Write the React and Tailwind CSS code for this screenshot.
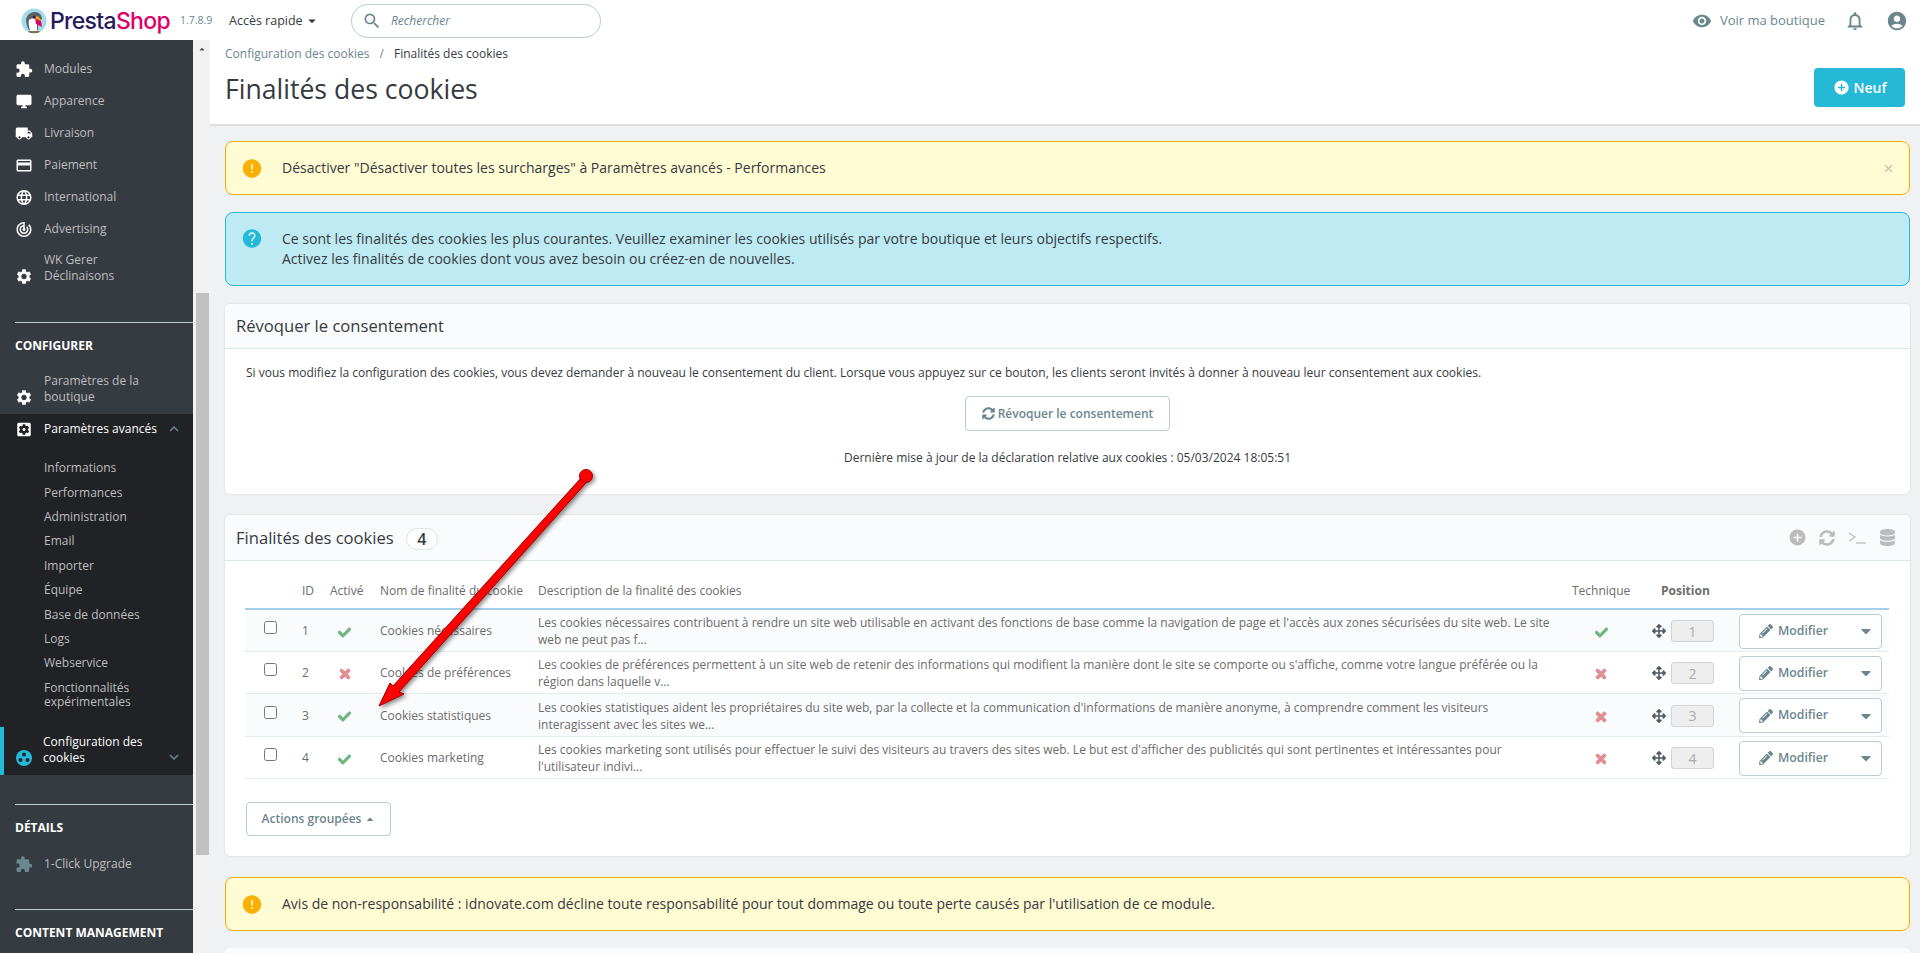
import React from 'react';
import {
  MdExtension, MdDesktopWindows, MdLocalShipping, MdCreditCard, MdLanguage, MdTrackChanges, MdSettings,
  MdSettingsApplications, MdKeyboardArrowUp, MdKeyboardArrowDown, MdVisibility, MdNotificationsNone,
  MdAccountCircle, MdSearch, MdError, MdHelp, MdArrowDropDown, MdAddCircle, MdClose,
} from 'react-icons/md';
import { FaCheck, FaTimes, FaPencilAlt, FaArrowsAlt, FaSyncAlt, FaDatabase, FaCaretUp, FaCaretDown } from 'react-icons/fa';

const TOP_ITEMS = [
  { label: 'Modules', Icon: MdExtension },
  { label: 'Apparence', Icon: MdDesktopWindows },
  { label: 'Livraison', Icon: MdLocalShipping },
  { label: 'Paiement', Icon: MdCreditCard },
  { label: 'International', Icon: MdLanguage },
  { label: 'Advertising', Icon: MdTrackChanges },
];

const SUB_ITEMS = [
  'Informations', 'Performances', 'Administration', 'Email', 'Importer', 'Équipe', 'Base de données', 'Logs', 'Webservice',
];

const ROWS = [
  {
    id: 1, active: true, name: 'Cookies nécessaires', tech: true, h: 'h-[42px]', bg: 'bg-[#fafbfc]',
    desc: "Les cookies nécessaires contribuent à rendre un site web utilisable en activant des fonctions de base comme la navigation de page et l'accès aux zones sécurisées du site web. Le site web ne peut pas f...",
  },
  {
    id: 2, active: false, name: 'Cookies de préférences', tech: false, h: 'h-[42px]', bg: 'bg-white',
    desc: "Les cookies de préférences permettent à un site web de retenir des informations qui modifient la manière dont le site se comporte ou s'affiche, comme votre langue préférée ou la région dans laquelle v...",
  },
  {
    id: 3, active: true, name: 'Cookies statistiques', tech: false, h: 'h-[43px]', bg: 'bg-[#fafbfc]',
    desc: "Les cookies statistiques aident les propriétaires du site web, par la collecte et la communication d'informations de manière anonyme, à comprendre comment les visiteurs interagissent avec les sites we...",
  },
  {
    id: 4, active: true, name: 'Cookies marketing', tech: false, h: 'h-[42px]', bg: 'bg-white',
    desc: "Les cookies marketing sont utilisés pour effectuer le suivi des visiteurs au travers des sites web. Le but est d'afficher des publicités qui sont pertinentes et intéressantes pour l'utilisateur indivi...",
  },
];

const StatusIcon = ({ on }) => (
  <div className="flex justify-center pt-[2px]">
    {on
      ? <FaCheck className="stroke-current stroke-[30] text-[13px] text-[#70b580]" />
      : <FaTimes className="stroke-current stroke-[40] text-[14px] text-[#e08f95]" />}
  </div>
);

const Logo = () => (
  <div className="flex items-center">
    <svg width="26" height="26" viewBox="0 0 26 26" className="ml-[21px]">
      <circle cx="13" cy="13" r="12.5" fill="#a4dbe8" />
      <path d="M5 12 C6 6 10 4 14 4 C18 4 21 7 21 11 L17 13 L17 22 L8 22 C6 19 5 15 5 12 Z" fill="#5c6166" />
      <path d="M8 12 C10 10 14 10 16 12 L16 23 C13 25 10 24 9 22 C8 19 7 15 8 12 Z" fill="#fff" />
      <path d="M14 9 L20 13 L21 19 L15 16 Z" fill="#df0067" />
      <path d="M15 8 L18 9 L20 13 L15 11 Z" fill="#f6a800" />
      <circle cx="13" cy="9" r="1.2" fill="#251b5b" />
      <path d="M7 23 L19 23 L17 25 L9 25 Z" fill="#8a6d4a" />
    </svg>
    <span className="ml-[3px] text-[23px] leading-none tracking-[-0.7px] font-['Inter',sans-serif] font-medium">
      <span className="text-[#251b5b]">Presta</span><span className="text-[#df0067]">Shop</span>
    </span>
  </div>
);

const Header = () => (
  <header className="flex h-10 items-center bg-white pt-[2px]">
    <div className="flex w-[180px] shrink-0 items-center">
      <Logo />
    </div>
    <span className="w-[49px] text-[10.5px] text-[#6c868e]">1.7.8.9</span>
    <span className="flex w-[122px] items-center text-[12.5px] text-[#363a41]">
      Accès rapide <MdArrowDropDown className="text-[18px]" />
    </span>
    <div className="flex h-[34px] w-[250px] items-center rounded-full border border-[#bbcdd2] pl-[10px]">
      <MdSearch className="text-[20px] text-[#6c868e]" />
      <span className="ml-[9px] text-[12px] italic text-[#6c868e]">Rechercher</span>
    </div>
    <div className="ml-auto flex items-center pr-[12px]">
      <MdVisibility className="text-[20px] text-[#6c868e]" />
      <span className="ml-[8px] text-[13px] text-[#6c868e]">Voir ma boutique</span>
      <MdNotificationsNone className="ml-[19px] text-[22px] text-[#6c868e]" />
      <MdAccountCircle className="ml-[20px] text-[22px] text-[#6c868e]" />
    </div>
  </header>
);

const SideSection = ({ title }) => (
  <div className="ml-[15px] shrink-0 border-t border-[#bbcdd2] pt-[15px] text-[12px] leading-[16px] font-bold text-white">{title}</div>
);

const Sidebar = () => (
  <aside className="flex w-[193px] shrink-0 flex-col overflow-hidden bg-[#363a41] pt-[13px] font-['Open_Sans',sans-serif] text-[12px] text-[#bebebe]">
    {TOP_ITEMS.map(({ label, Icon }) => (
      <div key={label} className="flex h-8 shrink-0 items-center pl-[15px]">
        <Icon className="w-[18px] text-[19px] text-white" />
        <span className="ml-[11px]">{label}</span>
      </div>
    ))}
    <div className="mt-[7px] flex shrink-0 items-end pl-[15px]">
      <MdSettings className="-mb-[2px] w-[18px] text-[19px] text-white" />
      <span className="ml-[11px] leading-4">WK Gerer<br />Déclinaisons</span>
    </div>
    <div className="h-[38px] shrink-0" />
    <SideSection title="CONFIGURER" />
    <div className="mt-[19px] flex shrink-0 items-end pb-[9px] pl-[15px]">
      <MdSettings className="-mb-[2px] w-[18px] text-[19px] text-white" />
      <span className="ml-[11px] leading-4">Paramètres de la<br />boutique</span>
    </div>
    <div className="flex h-[361px] shrink-0 flex-col bg-[#202226]">
      <div className="flex h-[30px] shrink-0 items-center pl-[15px] pr-[10px] text-white">
        <MdSettingsApplications className="w-[18px] text-[19px] text-white" />
        <span className="ml-[11px]">Paramètres avancés</span>
        <MdKeyboardArrowUp className="ml-auto text-[18px] text-[#6c868e]" />
      </div>
      <div className="h-[12px] shrink-0" />
      {SUB_ITEMS.map((s) => (
        <div key={s} className="flex h-[24.4px] shrink-0 items-center pl-[44px]">{s}</div>
      ))}
      <div className="mt-[5px] ml-[44px] shrink-0 leading-[14px]">Fonctionnalités<br />expérimentales</div>
      <div className="mt-[18px] flex h-[48px] shrink-0 items-end border-l-4 border-[#25b9d7] pl-[11px] pr-[10px] pb-[9px] text-white">
        <svg width="18" height="18" viewBox="0 0 18 18" className="-mb-[1px] shrink-0">
          <circle cx="9" cy="9" r="8" fill="#25b9d7" />
          <circle cx="9" cy="5.5" r="2" fill="#202226" />
          <circle cx="5.5" cy="11" r="2" fill="#202226" />
          <circle cx="12.5" cy="11" r="2" fill="#202226" />
        </svg>
        <span className="ml-[10px] leading-4">Configuration des<br />cookies</span>
        <MdKeyboardArrowDown className="ml-auto text-[18px] text-[#6c868e]" />
      </div>
    </div>
    <div className="h-[29px] shrink-0" />
    <SideSection title="DÉTAILS" />
    <div className="mt-[20px] flex h-[16px] shrink-0 items-center pl-[15px]">
      <MdExtension className="w-[18px] text-[19px] text-[#6c868e]" />
      <span className="ml-[11px]">1-Click Upgrade</span>
    </div>
    <div className="h-[37px] shrink-0" />
    <SideSection title="CONTENT MANAGEMENT" />
  </aside>
);

const FakeScrollbar = () => (
  <div className="flex w-[17px] shrink-0 flex-col items-center bg-[#f1f1f1] pl-[1px]">
    <FaCaretUp className="mt-[5px] h-[8px] text-[10px] text-[#505050]" />
    <div className="mt-[240px] h-[562px] w-[13px] bg-[#c1c1c1]" />
  </div>
);

const Alert = ({ kind, h, children, close }) => {
  const warn = kind === 'warn';
  return (
    <div className={`relative flex rounded-lg border pl-[15px] text-[14px] leading-[20px] text-[#363a41] ${h} ${warn ? 'border-[#fab000] bg-[#fffbd3]' : 'border-[#25b9d7] bg-[#beeaf3]'}`}>
      {warn
        ? <MdError className="mt-[14px] w-[22px] text-[25px] text-[#fab000]" />
        : <MdHelp className="mt-[13px] w-[22px] text-[25px] text-[#25b9d7]" />}
      <div className="ml-[19px] pt-[16px]">{children}</div>
      {close && <MdClose className="absolute top-[20px] right-[14px] text-[13px] text-[#b8b8a8]" />}
    </div>
  );
};

const PanelHead = ({ children, right }) => (
  <div className="flex items-center justify-between rounded-t-[5px] border-b border-[#dbe6e9] bg-[#fafbfc] pl-[11px] pr-[8px] text-[16.6px] font-normal text-[#363a41]">
    {children}
    {right}
  </div>
);

const RowActions = () => (
  <div className="flex h-[35px] w-[143px] items-center rounded-[4px] border border-[#bbcdd2] bg-white pl-[19px] text-[12.25px] font-semibold text-[#6c868e]">
    <FaPencilAlt className="text-[14px]" />
    <span className="ml-[5px]">Modifier</span>
    <FaCaretDown className="ml-[30px] text-[16px]" />
  </div>
);

const CookieTable = () => (
  <table className="w-[1644px] table-fixed border-collapse text-[12px] text-[#6c6c6c]">
    <colgroup>
      <col className="w-[50px]" />
      <col className="w-[27px]" />
      <col className="w-[50px]" />
      <col className="w-[158px]" />
      <col className="w-[1034px]" />
      <col className="w-[76px]" />
      <col className="w-[90px]" />
      <col className="w-[159px]" />
    </colgroup>
    <thead>
      <tr className="h-[48px] border-b-2 border-[#a4d0e8] text-left text-[12px] font-normal">
        <th />
        <th className="pl-[7px] pb-[8px] align-bottom font-normal">ID</th>
        <th className="pl-[8px] pb-[8px] align-bottom font-normal">Activé</th>
        <th className="pl-[8px] pb-[8px] align-bottom font-normal">Nom de finalité du cookie</th>
        <th className="pl-[8px] pb-[8px] align-bottom font-normal">Description de la finalité des cookies</th>
        <th className="pl-[8px] pb-[8px] align-bottom font-normal">Technique</th>
        <th className="pl-[21px] pb-[8px] align-bottom font-bold">Position</th>
        <th />
      </tr>
    </thead>
    <tbody>
      {ROWS.map((r) => (
        <tr key={r.id} className={`${r.h} border-b border-[#e4ecef] ${r.bg}`}>
          <td className="pt-[2px] text-center"><input type="checkbox" readOnly className="relative -top-[1px]" /></td>
          <td className="pt-[2px] pl-[7px]">{r.id}</td>
          <td className="pt-[2px] pr-[5px]"><StatusIcon on={r.active} /></td>
          <td className="pt-[2px] pl-[8px]">{r.name}</td>
          <td className="px-[8px] pt-[2px] leading-[17px]">{r.desc}</td>
          <td className="pt-[2px] pr-[2px]"><StatusIcon on={r.tech} /></td>
          <td className="pt-[2px]">
            <div className="flex items-center pl-[12px]">
              <FaArrowsAlt className="text-[14px] text-[#505a60]" />
              <span className="ml-[5px] flex h-[22px] w-[43px] items-center justify-center rounded-[3px] border border-[#d3d3d3] bg-[#eee] text-[14px] text-[#aaa]">{r.id}</span>
            </div>
          </td>
          <td className="pt-[2px] pl-[9px]"><RowActions /></td>
        </tr>
      ))}
    </tbody>
  </table>
);

const Main = () => (
  <main className="min-w-0 flex-1 overflow-hidden bg-[#eff1f2]">
    <div className="flex h-[86px] items-start justify-between border-b-2 border-[#dfdfdf] bg-white pl-[15px] pr-[15px]">
      <div>
        <div className="pt-[6px] text-[12px] leading-4 text-[#363a41]">
          <span className="text-[#6c868e]">Configuration des cookies</span>
          <span className="mx-[10px] text-[#6c868e]">/</span>
          Finalités des cookies
        </div>
        <h1 className="mt-[8px] text-[26.6px] leading-[38px] font-normal text-[#363a41]">Finalités des cookies</h1>
      </div>
      <button className="mt-[28px] flex h-[39px] w-[91px] items-center justify-center gap-[4px] rounded-[4px] bg-[#25b9d7] text-[14px] font-semibold text-white">
        <MdAddCircle className="text-[17px]" /> Neuf
      </button>
    </div>

    <div className="flex flex-col pl-[15px] pr-[10px] pt-[15px]">
      <Alert kind="warn" h="h-[54px]" close>Désactiver "Désactiver toutes les surcharges" à Paramètres avancés - Performances</Alert>
      <div className="h-[17px]" />
      <Alert kind="info" h="h-[74px]">
        Ce sont les finalités des cookies les plus courantes. Veuillez examiner les cookies utilisés par votre boutique et leurs objectifs respectifs.<br />
        Activez les finalités de cookies dont vous avez besoin ou créez-en de nouvelles.
      </Alert>

      <section className="mt-[18px] h-[190px] rounded-[5px] bg-white shadow-[0_0_2px_rgba(0,0,0,0.15)]">
        <PanelHead><span className="flex h-[44px] items-center">Révoquer le consentement</span></PanelHead>
        <div className="flex flex-col items-center pt-[15px] text-[12px] text-[#363a41]">
          <p className="w-full pl-[21px] leading-[18px]">Si vous modifiez la configuration des cookies, vous devez demander à nouveau le consentement du client. Lorsque vous appuyez sur ce bouton, les clients seront invités à donner à nouveau leur consentement aux cookies.</p>
          <button className="mt-[14px] flex h-[35px] w-[205px] items-center justify-center gap-[3px] rounded-[4px] border border-[#bbcdd2] text-[12px] font-semibold text-[#6c868e]">
            <FaSyncAlt className="text-[13px]" /> Révoquer le consentement
          </button>
          <p className="mt-[18px] leading-[18px]">Dernière mise à jour de la déclaration relative aux cookies : 05/03/2024 18:05:51</p>
        </div>
      </section>

      <section className="mt-[21px] h-[341px] rounded-[5px] bg-white shadow-[0_0_2px_rgba(0,0,0,0.15)]">
        <PanelHead
          right={
            <div className="flex items-center text-[#bbb]">
              <span className="flex w-[30px] justify-center"><MdAddCircle className="text-[19px]" /></span>
              <span className="flex w-[30px] justify-center"><FaSyncAlt className="text-[16px]" /></span>
              <span className="flex w-[30px] justify-center">
                <svg width="18" height="14" viewBox="0 0 18 14" fill="none" stroke="#bbb" strokeWidth="1.3">
                  <path d="M1 2 L7 6 L1 10" />
                  <path d="M8 12 L18 12" />
                </svg>
              </span>
              <span className="flex w-[30px] justify-center"><FaDatabase className="text-[17px]" /></span>
            </div>
          }
        >
          <span className="flex h-[45px] items-center pt-[2px]">
            Finalités des cookies
            <span className="ml-[12px] flex h-[22px] w-[32px] items-center justify-center rounded-full border border-[#dbe6e9] bg-white text-[16px] font-semibold">4</span>
          </span>
        </PanelHead>
        <div className="pl-[20px]">
          <CookieTable />
          <button className="mt-[23px] ml-[1px] flex h-[34px] w-[145px] items-center justify-center gap-[4px] rounded-[4px] border border-[#bbcdd2] text-[12px] font-semibold text-[#6c868e]">
            Actions groupées <FaCaretUp className="text-[10px]" />
          </button>
        </div>
      </section>

      <div className="h-[21px]" />
      <Alert kind="warn" h="h-[54px]">Avis de non-responsabilité : idnovate.com décline toute responsabilité pour tout dommage ou toute perte causés par l'utilisation de ce module.</Alert>
      <div className="mt-[17px] h-[40px] rounded-t-[5px] bg-[#fafbfc]" />
    </div>
  </main>
);

const RedArrow = () => (
  <svg className="pointer-events-none absolute top-0 left-0 drop-shadow-[2px_2px_2px_rgba(0,0,0,0.45)]" width="1920" height="953" viewBox="0 0 1920 953">
    <path d="M581 478 L586 483 L399 692 L404 694 L379 706 L390 683 L393 686 Z" fill="#f00" stroke="#a00000" strokeWidth="1" />
    <circle cx="586" cy="476" r="6.5" fill="#f00" stroke="#a00000" strokeWidth="1" />
  </svg>
);

export default function App() {
  return (
    <div className="relative flex h-[953px] w-[1920px] flex-col overflow-hidden font-['Open_Sans',sans-serif]">
      <Header />
      <div className="flex min-h-0 flex-1">
        <Sidebar />
        <FakeScrollbar />
        <Main />
      </div>
      <RedArrow />
    </div>
  );
}
